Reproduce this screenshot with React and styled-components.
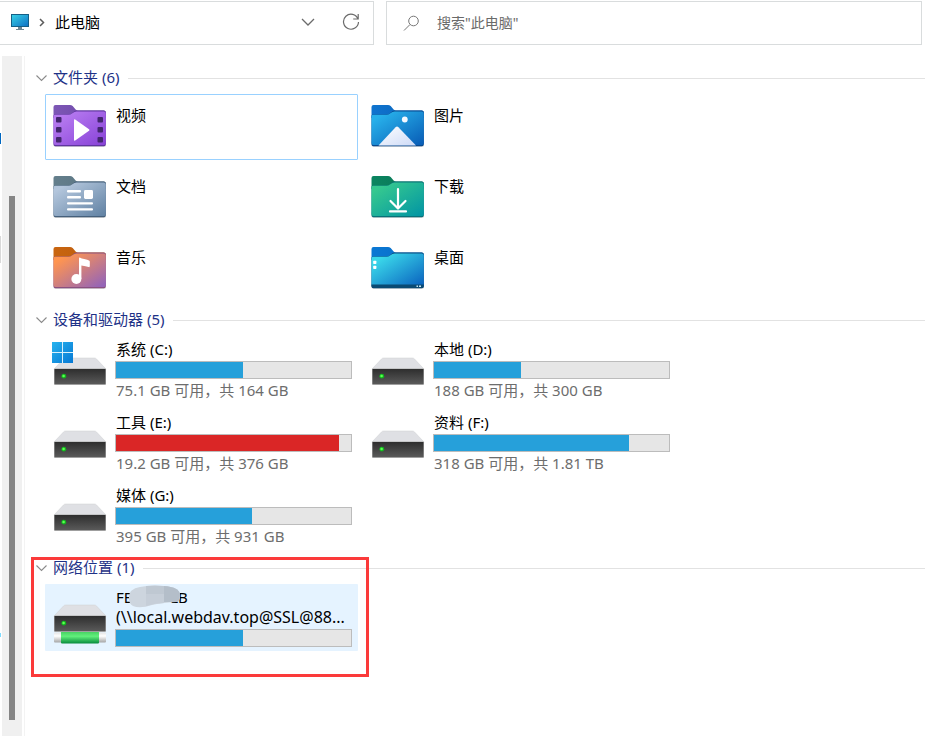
import React, { useState } from "react";
import styled, { createGlobalStyle } from "styled-components";

const GlobalStyle = createGlobalStyle`
  *, *::before, *::after { box-sizing: border-box; }
  body {
    margin: 0;
    background: #fff;
    color: #000;
    font-family: "Noto Sans", "Noto Sans CJK SC", sans-serif;
    font-size: 15px;
    line-height: 20px;
  }
  button, input { font: inherit; color: inherit; }
`;

const Window = styled.div`
  min-height: 100vh;
  display: flex;
  flex-direction: column;
`;

const TopBar = styled.header`
  display: flex;
  gap: 12px;
  padding: 1px 10px 11px 0;
`;

const AddressBar = styled.nav`
  flex: 0 0 374px;
  height: 44px;
  display: flex;
  align-items: center;
  gap: 9px;
  padding: 0 13px 2px 10px;
  border: 1px solid #d9dcdd;
  border-left: 0;
`;

const Crumb = styled.a`
  flex: 1;
  color: inherit;
  text-decoration: none;
`;

const IconButton = styled.button`
  display: flex;
  padding: 0;
  border: 0;
  background: none;
  margin-left: ${(p) => p.$gap || 0}px;
`;

const SearchBox = styled.form`
  flex: 1;
  min-width: 0;
  height: 44px;
  display: flex;
  align-items: center;
  gap: 17px;
  padding: 0 16px;
  border: 1px solid #d9dcdd;
`;

const SearchInput = styled.input`
  flex: 1;
  min-width: 0;
  padding: 0;
  border: 0;
  outline: 0;
  background: none;
  font-size: 14px;
  &::placeholder { color: #6a6a6a; opacity: 1; }
`;

const Body = styled.div`
  flex: 1;
  display: flex;
`;

const PaneEdge = styled.div`
  width: 2px;
  display: flex;
  flex-direction: column;
  padding-top: 77px;
`;

const EdgeMark = styled.span`
  width: 1px;
  height: ${(p) => p.$height}px;
  margin-bottom: ${(p) => p.$after}px;
  background: ${(p) => p.$color};
`;

const ScrollTrack = styled.div`
  width: 20px;
  display: flex;
  justify-content: center;
  padding: 140px 0 16px;
  background: #f0f0f0;
`;

const ScrollThumb = styled.div`
  width: 6px;
  background: #858585;
`;

const Content = styled.main`
  flex: 1;
  min-width: 0;
  display: flex;
  flex-direction: column;
  gap: 7px;
  margin-left: 2px;
  padding: 11px 7px 16px 6px;
  border-left: 1px solid #f3f3f3;
`;

const Section = styled.section`
  position: relative;
`;

const SectionHeader = styled.button`
  width: 100%;
  height: 22px;
  display: flex;
  align-items: center;
  gap: 6px;
  margin-bottom: 5px;
  padding: 0 0 0 5px;
  border: 0;
  background: none;
  color: #1e3287;
  white-space: nowrap;
`;

const SectionTitle = styled.span`
  padding-bottom: 2px;
`;

const Rule = styled.span`
  flex: 1;
  height: 1px;
  margin-left: 2px;
  background: #e2e2e2;
`;

const Grid = styled.div`
  display: grid;
  grid-template-columns: repeat(auto-fill, 313px);
  gap: 5px;
  padding-left: 14px;
`;

const Tile = styled.button`
  display: flex;
  align-items: flex-start;
  gap: 8px;
  min-height: ${(p) => p.$minHeight}px;
  padding: 2px 5px 0 6px;
  border: 1px solid ${(p) => (p.$focused ? "#99d1ff" : "transparent")};
  border-radius: 1px;
  background: ${(p) => (p.$selected ? "#e5f3ff" : "transparent")};
  text-align: left;
`;

const FolderArt = styled.svg`
  flex: none;
  margin-top: 7px;
`;

const DriveArt = styled.svg`
  flex: none;
  margin-top: 1px;
`;

const FolderName = styled.span`
  margin-top: 8px;
  padding-left: 1px;
`;

const DriveInfo = styled.span`
  flex: 1;
  min-width: 0;
  display: flex;
  flex-direction: column;
`;

const Line = styled.span`
  position: relative;
  padding-left: 1px;
  color: ${(p) => (p.$muted ? "#6d6d6d" : "#000")};
  white-space: nowrap;
`;

const PathLine = styled(Line)`
  overflow: hidden;
  text-overflow: ellipsis;
  font-size: 16px;
`;

const Meter = styled.span`
  height: 18px;
  margin: 2px 0 1px;
  border: 1px solid #bcbcbc;
  background: #e6e6e6;
`;

const MeterFill = styled.span`
  display: block;
  height: 100%;
  background: ${(p) => (p.$full ? "#da2626" : "#26a0da")};
`;

const HiddenPart = styled.span`
  display: inline-block;
  width: 38px;
`;

const Smudge = styled.svg`
  position: absolute;
  left: 13px;
  top: -2px;
`;

const Highlight = styled.div`
  position: absolute;
  top: 0;
  left: 0;
  width: 338px;
  height: 120px;
  border: 3px solid #fb3a3a;
  pointer-events: none;
`;

const Chevron = ({ closed }) => (
  <svg width="11" height="8" viewBox="0 0 11 8" fill="none" stroke="#8a8a8a" strokeWidth="1.1" aria-hidden="true">
    <path d={closed ? "M3 0l4 4-4 4" : "M.5 1.5l5 5 5-5"} />
  </svg>
);

const ComputerIcon = () => (
  <svg width="20" height="18" viewBox="0 0 20 18" aria-hidden="true">
    <defs>
      <linearGradient id="screen" x1="0" y1="0" x2="1" y2="1">
        <stop offset="0" stopColor="#37d3e6" />
        <stop offset="1" stopColor="#0f6fc4" />
      </linearGradient>
    </defs>
    <path d="M8 14h4v2h2v1H6v-1h2z" fill="#6e8794" />
    <rect x="1.5" y="1.5" width="17" height="12" fill="url(#screen)" stroke="#155f86" />
  </svg>
);

const folders = {
  video: ["#7d57b5", "#6a45a6", "#b67af0", "#8a45d8", "#5f35a0"],
  pictures: ["#0f74cf", "#0b62b8", "#27b0ea", "#0a60b8", "#07498f"],
  documents: ["#647f8c", "#587280", "#b3c6dc", "#6585a6", "#45607c"],
  downloads: ["#0b8560", "#0a7354", "#35c88f", "#0497a3", "#08727a"],
  music: ["#c9650f", "#b95c10", "#ff9550", "#9464b8", "#895080"],
  desktop: ["#0a78d4", "#0a6cc4", "#3ad8ea", "#0b65c0", "#08497a"],
};

const glyphs = {
  video: (
    <>
      {[4, 45.5].map((x) =>
        [13, 23, 33].map((y) => (
          <rect key={`${x}-${y}`} x={x} y={y} width="5.5" height="5.5" rx="1" fill="#43266f" />
        ))
      )}
      <path d="M22 16.2v19.6q0 1.4 1.2.7L37 26.8q1-.8 0-1.6L23.2 15.5q-1.2-.7-1.2.7z" fill="#fff" />
    </>
  ),
  pictures: (
    <>
      <circle cx="34.8" cy="15.5" r="2.9" fill="#f4f8ff" />
      <path d="M8.5 41.5L25.6 23.2q1.4-1.4 2.8 0L46 41.5z" fill="url(#peak)" />
    </>
  ),
  documents: (
    <g fill="#fff">
      <rect x="15" y="15" width="14" height="2.4" rx="1" />
      <rect x="15" y="21" width="14" height="2.4" rx="1" />
      <rect x="32" y="15" width="9" height="9" rx="1.4" />
      <rect x="15" y="27.2" width="26" height="2.4" rx="1" />
      <rect x="15" y="33.2" width="26" height="2.4" rx="1" />
    </g>
  ),
  downloads: (
    <g stroke="#fff" strokeWidth="2.2" fill="none" strokeLinecap="round" strokeLinejoin="round">
      <path d="M28 14v19M20.5 26l7.5 7.5 7.5-7.5M20 36.4h16" />
    </g>
  ),
  music: (
    <g fill="#fff">
      <circle cx="24.4" cy="33" r="5" />
      <path d="M27 33V12.5q0-1.2 1.2-.8 1.3.7 4 1.3 3.6.7 4.8 1.4.8.5.8 1.4v4.3q0 1.4-1.2.9-2.6-1-7.2-1.6V33z" />
    </g>
  ),
  desktop: (
    <>
      <rect x="3.2" y="14.8" width="3.2" height="3.2" rx=".7" fill="#fff" />
      <rect x="3.2" y="19.8" width="3.2" height="3.2" rx=".7" fill="#fff" />
      <path d="M1.5 38.5H53.8V40q0 2-2 2H3.5q-2 0-2-2z" fill="#0a4a73" />
      <path d="M46.5 39.5H48V41h-1.5zM49 39.5h2V41h-2z" fill="#c8e6f5" />
    </>
  ),
};

function FolderIcon({ kind }) {
  const [tabA, tabB, from, to, edge] = folders[kind];
  return (
    <FolderArt width="55" height="46" viewBox="0 0 55 46" aria-hidden="true">
      <defs>
        <linearGradient id={`tab-${kind}`} x1="0" y1="0" x2="1" y2="0">
          <stop offset="0" stopColor={tabA} />
          <stop offset="1" stopColor={tabB} />
        </linearGradient>
        <linearGradient id={`front-${kind}`} x1="0" y1="0" x2="1" y2="1">
          <stop offset="0" stopColor={from} />
          <stop offset=".15" stopColor={from} />
          <stop offset=".95" stopColor={to} />
        </linearGradient>
        <linearGradient id="peak" x1="0" y1="0" x2="1" y2="1">
          <stop offset="0" stopColor="#fff" />
          <stop offset="1" stopColor="#cddaf7" />
        </linearGradient>
      </defs>
      <rect x="1.5" y="36" width="52.5" height="7" rx="2" fill="#000" opacity=".16" />
      <path d="M1.5 14V3q0-2 2-2H18q1.6 0 2.7 1.1l2.9 3.3q1 1.1 2.4 1.1h25.800q2 0 2 2V14z" fill={`url(#tab-${kind})`} />
      <path d="M1.5 39V12q0-1.600 1.600-1.600h13.400q2 0 3.500-1.200l2.400-1.900q1-.7 2.200-.7h27.200q2 0 2 2V40.200q0 2-2 2H3.500q-2 0-2-2z" fill={edge} />
      <path d="M1.5 38V12.400q0-1.700 1.600-1.700h13.400q2 0 3.500-1.200l2.400-1.500q1-.6 2.200-.6h27.200q2 0 2 2V39q0 2-2 2H3.500q-2 0-2-2z" fill={`url(#front-${kind})`} />
      {glyphs[kind]}
    </FolderArt>
  );
}

function DriveIcon({ variant }) {
  const network = variant === "network";
  return (
    <DriveArt width="55" height={network ? 58 : 47} viewBox={network ? "0 1 55 58" : "0 0 55 47"} aria-hidden="true">
      <defs>
        <linearGradient id="case" x1="0" y1="0" x2="0" y2="1">
          <stop offset="0" stopColor="#2e2e2e" />
          <stop offset="1" stopColor="#5a5a5a" />
        </linearGradient>
        <linearGradient id="flag" x1="0" y1="0" x2="1" y2="1">
          <stop offset="0" stopColor="#27b3ee" />
          <stop offset="1" stopColor="#0678d4" />
        </linearGradient>
        <linearGradient id="pipe" x1="0" y1="0" x2="0" y2="1">
          <stop offset="0" stopColor="#45cf60" />
          <stop offset=".4" stopColor="#62f07c" />
          <stop offset="1" stopColor="#078a3c" />
        </linearGradient>
        <linearGradient id="pipeEnd" x1="0" y1="0" x2="0" y2="1">
          <stop offset="0" stopColor="#e4e4e4" />
          <stop offset=".35" stopColor="#fff" />
          <stop offset="1" stopColor="#a5a5a5" />
        </linearGradient>
      </defs>
      {network && (
        <>
          <rect x="2" y="45.5" width="52" height="10" rx="1" fill="url(#pipeEnd)" />
          <rect x="9" y="44.5" width="38" height="12" rx="1" fill="url(#pipe)" />
        </>
      )}
      <path d="M13.5 18h29q1 0 1.8.8L54 29H2l9.7-10.200q.8-.8 1.800-.8z" fill="#dfe0e4" stroke="#cfd0d3" strokeWidth=".5" />
      <rect x="2" y="28.5" width="52" height="16.5" rx="1" fill="#b0b0b0" />
      <rect x="2.5" y="29" width="51" height="15.2" fill="url(#case)" />
      <circle cx="11.8" cy="36.2" r="2.4" fill="#13b51f" />
      <circle cx="11.6" cy="36" r="1.3" fill="#5dff52" />
      {variant === "system" && (
        <>
          <rect x="0" y="2" width="21" height="21" fill="#d8f0fb" />
          <path d="M0 2h10v10H0zM11 2h10v10H11zM0 13h10v10H0zM11 13h10v10H11z" fill="url(#flag)" />
        </>
      )}
    </DriveArt>
  );
}

const folderItems = [
  ["video", "视频"],
  ["pictures", "图片"],
  ["documents", "文档"],
  ["downloads", "下载"],
  ["music", "音乐"],
  ["desktop", "桌面"],
];

const driveItems = [
  { name: "系统 (C:)", detail: "75.1 GB 可用，共 164 GB", used: 54, variant: "system" },
  { name: "本地 (D:)", detail: "188 GB 可用，共 300 GB", used: 37 },
  { name: "工具 (E:)", detail: "19.2 GB 可用，共 376 GB", used: 95, full: true },
  { name: "资料 (F:)", detail: "318 GB 可用，共 1.81 TB", used: 83 },
  { name: "媒体 (G:)", detail: "395 GB 可用，共 931 GB", used: 58 },
];

function UsageBar({ label, used, full }) {
  return (
    <Meter role="progressbar" aria-label={label} aria-valuenow={used}>
      <MeterFill $full={full} style={{ width: `${used}%` }} />
    </Meter>
  );
}

function Group({ title, count, children, outlined }) {
  const [open, setOpen] = useState(true);
  return (
    <Section>
      <SectionHeader type="button" aria-expanded={open} onClick={() => setOpen(!open)}>
        <Chevron closed={!open} />
        <SectionTitle>{title} ({count})</SectionTitle>
        <Rule />
      </SectionHeader>
      {open && <Grid>{children}</Grid>}
      {outlined && <Highlight />}
    </Section>
  );
}

export default function App() {
  return (
    <>
      <GlobalStyle />
      <Window>
        <TopBar>
          <AddressBar aria-label="地址">
            <ComputerIcon />
            <svg width="7" height="9" viewBox="0 0 7 9" fill="none" stroke="#5c5c5c" strokeWidth="1.5" aria-hidden="true">
              <path d="M1 1l3.5 3.500L1 8" />
            </svg>
            <Crumb href="#">此电脑</Crumb>
            <IconButton type="button" aria-label="历史记录">
              <svg width="14" height="10" viewBox="0 0 14 10" fill="none" stroke="#6b6b6b" strokeWidth="1.3">
                <path d="M1 2l6 6 6-6" />
              </svg>
            </IconButton>
            <IconButton type="button" aria-label="刷新" $gap={18}>
              <svg width="18" height="18" viewBox="0 0 18 18" fill="none" stroke="#6b6b6b" strokeWidth="1.2">
                <path d="M16 6A7.5 7.5 0 1 0 16.5 9M16.2 1v5h-5" />
              </svg>
            </IconButton>
          </AddressBar>
          <SearchBox role="search" onSubmit={(e) => e.preventDefault()}>
            <svg width="17" height="17" viewBox="0 0 17 17" fill="none" stroke="#777" aria-hidden="true">
              <circle cx="10.5" cy="6" r="4.8" />
              <path d="M7 9.5L1 15.5" />
            </svg>
            <SearchInput type="search" aria-label="搜索" placeholder={'搜索"此电脑"'} />
          </SearchBox>
        </TopBar>
        <Body>
          <PaneEdge aria-hidden="true">
            <EdgeMark $height={11} $after={92} $color="#0067c0" />
            <EdgeMark $height={27} $after={370} $color="#d9d9d9" />
            <EdgeMark $height={4} $after={0} $color="#7fdcff" />
          </PaneEdge>
          <ScrollTrack aria-hidden="true">
            <ScrollThumb />
          </ScrollTrack>
          <Content>
            <Group title="文件夹" count={6}>
              {folderItems.map(([kind, name]) => (
                <Tile key={kind} type="button" $minHeight={66} $focused={kind === "video"}>
                  <FolderIcon kind={kind} />
                  <FolderName>{name}</FolderName>
                </Tile>
              ))}
            </Group>
            <Group title="设备和驱动器" count={5}>
              {driveItems.map((d) => (
                <Tile key={d.name} type="button" $minHeight={68}>
                  <DriveIcon variant={d.variant} />
                  <DriveInfo>
                    <Line>{d.name}</Line>
                    <UsageBar label={d.name} used={d.used} full={d.full} />
                    <Line $muted>{d.detail}</Line>
                  </DriveInfo>
                </Tile>
              ))}
            </Group>
            <Group title="网络位置" count={1} outlined>
              <Tile type="button" $minHeight={67} $selected>
                <DriveIcon variant="network" />
                <DriveInfo>
                  <Line>
                    FE
                    <HiddenPart />
                    LB
                    <Smudge width="54" height="23" viewBox="0 0 54 23" aria-hidden="true">
                      <path d="M1 14Q0 4 12 2 22 0 34 1q15 0 18 8 1 7-4 8-15 1-24 3-12 4-19 1-4-2-4-7z" fill="#cdd5de" />
                      <path d="M18 1q9-1 18 0v8H18z" fill="#bfc8d2" />
                      <path d="M36 1q15 1 16 8 0 7-3 8H36z" fill="#b4bec9" />
                      <path d="M18 9h18v9q-9 0-18 3z" fill="#c6ced8" />
                    </Smudge>
                  </Line>
                  <PathLine>(\\local.webdav.top@SSL@88...</PathLine>
                  <UsageBar label="网络位置" used={54} />
                </DriveInfo>
              </Tile>
            </Group>
          </Content>
        </Body>
      </Window>
    </>
  );
}
